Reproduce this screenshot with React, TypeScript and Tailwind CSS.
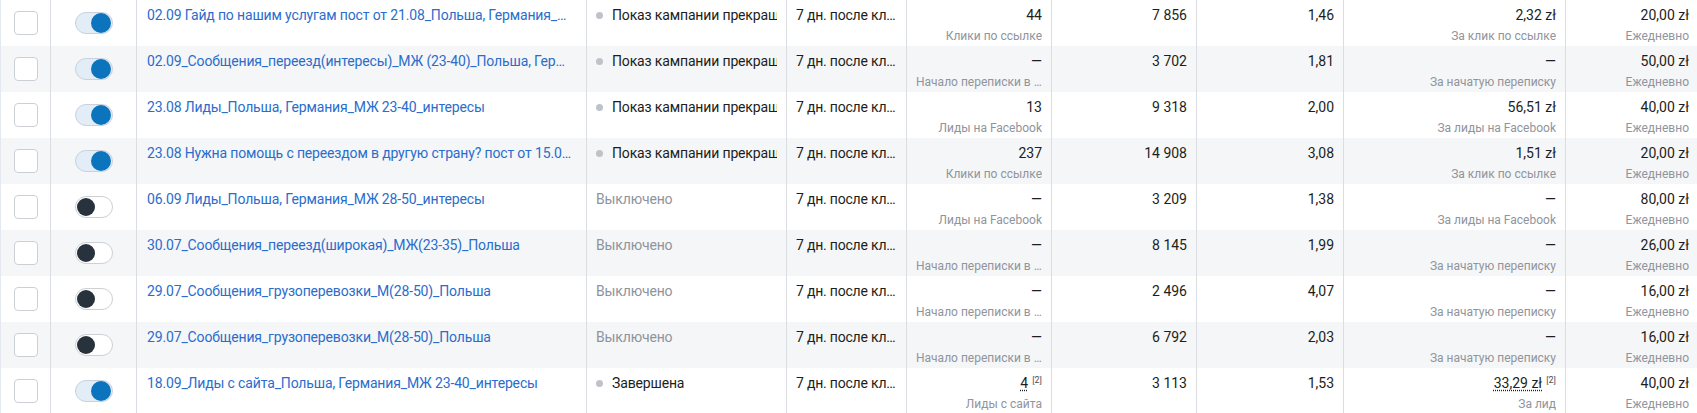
import React from "react";

interface Row {
  name: string;
  active: boolean;
  status: string;
  statusDot: boolean;
  result: string;
  resultNote?: boolean;
  resultLabel: string;
  reach: string;
  frequency: string;
  cost: string;
  costNote?: boolean;
  costLabel: string;
  budget: string;
}

const PAUSED = "Показ кампании прекращен";
const ATTRIBUTION = "7 дн. после клика";
const CHAT = "Начало переписки в сообщениях";

const rows: Row[] = [
  {
    name: "02.09 Гайд по нашим услугам пост от 21.08_Польша, Германия_МЖ 23-40",
    active: true,
    status: PAUSED,
    statusDot: true,
    result: "44",
    resultLabel: "Клики по ссылке",
    reach: "7 856",
    frequency: "1,46",
    cost: "2,32 zł",
    costLabel: "За клик по ссылке",
    budget: "20,00 zł",
  },
  {
    name: "02.09_Сообщения_переезд(интересы)_МЖ (23-40)_Польша, Германия",
    active: true,
    status: PAUSED,
    statusDot: true,
    result: "—",
    resultLabel: CHAT,
    reach: "3 702",
    frequency: "1,81",
    cost: "—",
    costLabel: "За начатую переписку",
    budget: "50,00 zł",
  },
  {
    name: "23.08 Лиды_Польша, Германия_МЖ 23-40_интересы",
    active: true,
    status: PAUSED,
    statusDot: true,
    result: "13",
    resultLabel: "Лиды на Facebook",
    reach: "9 318",
    frequency: "2,00",
    cost: "56,51 zł",
    costLabel: "За лиды на Facebook",
    budget: "40,00 zł",
  },
  {
    name: "23.08 Нужна помощь с переездом в другую страну? пост от 15.08_Польша",
    active: true,
    status: PAUSED,
    statusDot: true,
    result: "237",
    resultLabel: "Клики по ссылке",
    reach: "14 908",
    frequency: "3,08",
    cost: "1,51 zł",
    costLabel: "За клик по ссылке",
    budget: "20,00 zł",
  },
  {
    name: "06.09 Лиды_Польша, Германия_МЖ 28-50_интересы",
    active: false,
    status: "Выключено",
    statusDot: false,
    result: "—",
    resultLabel: "Лиды на Facebook",
    reach: "3 209",
    frequency: "1,38",
    cost: "—",
    costLabel: "За лиды на Facebook",
    budget: "80,00 zł",
  },
  {
    name: "30.07_Сообщения_переезд(широкая)_МЖ(23-35)_Польша",
    active: false,
    status: "Выключено",
    statusDot: false,
    result: "—",
    resultLabel: CHAT,
    reach: "8 145",
    frequency: "1,99",
    cost: "—",
    costLabel: "За начатую переписку",
    budget: "26,00 zł",
  },
  {
    name: "29.07_Сообщения_грузоперевозки_М(28-50)_Польша",
    active: false,
    status: "Выключено",
    statusDot: false,
    result: "—",
    resultLabel: CHAT,
    reach: "2 496",
    frequency: "4,07",
    cost: "—",
    costLabel: "За начатую переписку",
    budget: "16,00 zł",
  },
  {
    name: "29.07_Сообщения_грузоперевозки_М(28-50)_Польша",
    active: false,
    status: "Выключено",
    statusDot: false,
    result: "—",
    resultLabel: CHAT,
    reach: "6 792",
    frequency: "2,03",
    cost: "—",
    costLabel: "За начатую переписку",
    budget: "16,00 zł",
  },
  {
    name: "18.09_Лиды с сайта_Польша, Германия_МЖ 23-40_интересы",
    active: true,
    status: "Завершена",
    statusDot: true,
    result: "4",
    resultNote: true,
    resultLabel: "Лиды с сайта",
    reach: "3 113",
    frequency: "1,53",
    cost: "33,29 zł",
    costNote: true,
    costLabel: "За лид",
    budget: "40,00 zł",
  },
];

const Toggle = ({ on }: { on: boolean }) =>
  on ? (
    <div className="w-[38px] h-[22px] rounded-full bg-[#e3edf7] border border-[#c8d2dc] flex items-center justify-end pr-[1px]">
      <div className="w-[20px] h-[20px] rounded-full bg-[#0b74bd]" />
    </div>
  ) : (
    <div className="w-[38px] h-[22px] rounded-full bg-white border border-[#ccd0d5] flex items-center pl-[1px]">
      <div className="w-[18px] h-[18px] rounded-full bg-[#27323c]" />
    </div>
  );

// footnote marker next to estimated values
const Note = () => (
  <span className="ml-[4px] text-[9px] leading-none text-[#4b4f56] relative -top-[5px]">[2]</span>
);

const NumberCell = ({
  value,
  label,
  note,
}: {
  value: string;
  label?: string;
  note?: boolean;
}) => (
  <div className="border-r border-[#dadde1] px-[9px] pt-[5px] text-right overflow-hidden">
    <div className="text-[14px] leading-[20px] h-[20px] text-[#1c1e21] whitespace-nowrap">
      {note ? (
        <>
          <span className="underline decoration-dotted underline-offset-2">{value}</span>
          <Note />
        </>
      ) : (
        value
      )}
    </div>
    {label && (
      <div className="text-[12px] leading-[18px] mt-[2px] text-[#90949c] truncate">{label}</div>
    )}
  </div>
);

export default function App() {
  return (
    <div className="w-[1697px] h-[413px] overflow-hidden bg-white font-['Roboto',sans-serif] border-l border-[#e4e9ef]">
      {rows.map((row, i) => (
        <div
          key={i}
          className={`grid grid-cols-[50px_86px_450px_200px_120px_145px_145px_147px_222px_132px] h-[46px] ${
            i % 2 === 1 ? "bg-[#f5f6f7]" : "bg-white"
          }`}
        >
          <div className="border-r border-[#dadde1] flex items-center justify-center">
            <div className="w-[24px] h-[24px] rounded-[4px] border border-[#ccd0d5] bg-white" />
          </div>
          <div className="border-r border-[#dadde1] flex items-center justify-center">
            <Toggle on={row.active} />
          </div>
          <div className="border-r border-[#dadde1] pl-[10px] pr-[12px] pt-[5px] overflow-hidden">
            <div className="text-[14px] leading-[20px] tracking-[-0.15px] text-[#2a6dcc] truncate">
              {row.name}
            </div>
          </div>
          <div className="border-r border-[#dadde1] px-[9px] pt-[5px] overflow-hidden">
            <div className="flex items-center gap-[9px] text-[14px] leading-[20px] tracking-[-0.15px] whitespace-nowrap overflow-hidden">
              {row.statusDot && (
                <span className="w-[7px] h-[7px] rounded-full bg-[#bec3c9] shrink-0" />
              )}
              <span className={row.statusDot ? "text-[#1c1e21]" : "text-[#8d949e]"}>
                {row.status}
              </span>
            </div>
          </div>
          <div className="border-r border-[#dadde1] pl-[9px] pr-[5px] pt-[5px] overflow-hidden">
            <div className="text-[14px] leading-[20px] tracking-[-0.2px] text-[#1c1e21] truncate">
              {ATTRIBUTION}
            </div>
          </div>
          <NumberCell value={row.result} label={row.resultLabel} note={row.resultNote} />
          <NumberCell value={row.reach} />
          <NumberCell value={row.frequency} />
          <NumberCell value={row.cost} label={row.costLabel} note={row.costNote} />
          <div className="px-[9px] pt-[5px] text-right">
            <div className="text-[14px] leading-[20px] text-[#1c1e21]">{row.budget}</div>
            <div className="text-[12px] leading-[18px] mt-[2px] text-[#90949c]">Ежедневно</div>
          </div>
        </div>
      ))}
    </div>
  );
}
